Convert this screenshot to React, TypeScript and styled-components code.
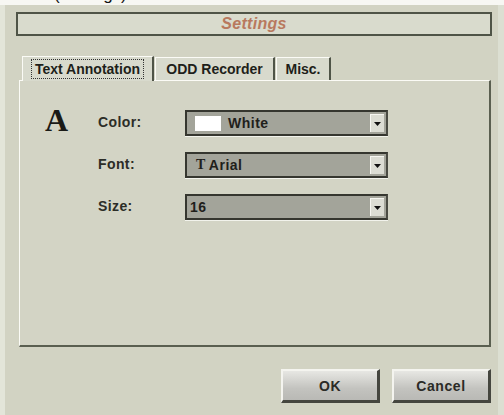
import styled, { createGlobalStyle } from "styled-components";

const GlobalStyle = createGlobalStyle`
  html, body {
    margin: 0;
    padding: 0;
    background: #d2d3c3;
  }
  body {
    font-family: "Liberation Sans", Arial, sans-serif;
  }
`;

const Caption = styled.div`
  height: 5px;
  overflow: hidden;
  background: #f7f7f3;
  padding-left: 54px;
`;

const CaptionText = styled.div`
  margin-top: -15px;
  font-size: 17px;
  line-height: 20px;
  color: #111;
`;

const Window = styled.div`
  height: 410px;
  box-sizing: border-box;
  border-left: 5px solid #e3e5d9;
  border-right: 6px solid #dcdfd2;
  padding: 7px 6px 0 11px;
  display: flex;
  flex-direction: column;
`;

const TitleBar = styled.div`
  height: 24px;
  box-sizing: border-box;
  border: 2px solid #4f5447;
  background: #d9dbcd;
  display: flex;
  align-items: center;
  justify-content: center;
`;

const Title = styled.span`
  font-size: 16px;
  font-weight: bold;
  font-style: italic;
  color: #b8795e;
  letter-spacing: 0.3px;
`;

const Tabs = styled.div`
  display: flex;
  align-items: flex-end;
  margin: 20px 0 0 6px;
  height: 24px;
`;

const Tab = styled.div<{ $active?: boolean; $w: number }>`
  width: ${(p) => p.$w}px;
  height: ${(p) => (p.$active ? 25 : 23)}px;
  box-sizing: border-box;
  background: #d8dacd;
  border-top: 1px solid #fbfbf6;
  border-left: 1px solid #fbfbf6;
  border-right: 2px solid #4f5447;
  margin-bottom: ${(p) => (p.$active ? -1 : 0)}px;
  margin-right: 1px;
  display: flex;
  align-items: center;
  justify-content: center;
  position: relative;
  z-index: ${(p) => (p.$active ? 1 : 0)};
`;

const TabLabel = styled.span<{ $focus?: boolean }>`
  font-size: 14px;
  font-weight: bold;
  color: #1e1f1a;
  padding: 1px 3px;
  border: 1px dotted ${(p) => (p.$focus ? "#333" : "transparent")};
`;

const Panel = styled.div`
  margin-left: 3px;
  width: 472px;
  height: 267px;
  box-sizing: border-box;
  border-top: 1px solid #fbfbf6;
  border-left: 1px solid #fbfbf6;
  border-right: 2px solid #5a5f50;
  border-bottom: 2px solid #5a5f50;
  background: #d3d4c5;
  display: grid;
  grid-template-columns: 78px 87px 203px;
  grid-auto-rows: 42px;
  padding: 29px 0 0 0;
  align-items: start;
`;

const BigA = styled.div`
  font-family: "Liberation Serif", "Times New Roman", serif;
  font-weight: bold;
  font-size: 32px;
  line-height: 26px;
  color: #1a1a16;
  padding-left: 25px;
  margin-top: -3px;
`;

const Label = styled.div`
  grid-column: 2;
  font-size: 14px;
  font-weight: bold;
  color: #2c2d27;
  letter-spacing: 0.4px;
  line-height: 25px;
`;

const Select = styled.div`
  grid-column: 3;
  height: 26px;
  box-sizing: border-box;
  border: 2px solid #35362f;
  border-right-color: #4a4b43;
  box-shadow: 0 1px 0 #f2f3ec;
  background: #a3a49a;
  display: flex;
  align-items: center;
  padding: 0 2px 0 3px;
`;

const Value = styled.span`
  flex: 1;
  font-size: 14px;
  font-weight: bold;
  color: #1f201b;
  letter-spacing: 0.5px;
  display: flex;
  align-items: center;
`;

const Swatch = styled.span`
  width: 26px;
  height: 15px;
  background: #ffffff;
  margin: 0 7px 0 5px;
`;

const FontGlyph = styled.span`
  font-family: "Liberation Serif", "Times New Roman", serif;
  font-weight: bold;
  font-size: 14px;
  margin: 0 3px 0 6px;
`;

const Arrow = styled.span`
  width: 14px;
  height: 18px;
  background: #dcddd4;
  border-top: 1px solid #f6f6f1;
  border-left: 1px solid #f6f6f1;
  box-sizing: border-box;
  display: flex;
  align-items: center;
  justify-content: center;
`;

const Buttons = styled.div`
  display: flex;
  justify-content: flex-end;
  gap: 12px;
  margin-top: 22px;
  padding-right: 1px;
`;

const Button = styled.div`
  width: 99px;
  height: 34px;
  box-sizing: border-box;
  border-top: 2px solid #f4f4ef;
  border-left: 2px solid #f4f4ef;
  border-right: 3px solid #45463f;
  border-bottom: 3px solid #45463f;
  background: linear-gradient(#e7e7e3, #c3c3bf 60%, #b9b9b5);
  display: flex;
  align-items: center;
  justify-content: center;
  font-size: 14px;
  font-weight: bold;
  color: #2b2b27;
  letter-spacing: 0.6px;
`;

function DropArrow() {
  return (
    <Arrow>
      <svg width="7" height="4" viewBox="0 0 7 4">
        <path d="M0 0 H7 L3.5 4 Z" fill="#111" />
      </svg>
    </Arrow>
  );
}

export default function App() {
  return (
    <>
      <GlobalStyle />
      <Caption>
        <CaptionText>(Settings)</CaptionText>
      </Caption>
      <Window>
        <TitleBar>
          <Title>Settings</Title>
        </TitleBar>
        <Tabs>
          <Tab $active $w={132}>
            <TabLabel $focus>Text Annotation</TabLabel>
          </Tab>
          <Tab $w={120}>
            <TabLabel>ODD Recorder</TabLabel>
          </Tab>
          <Tab $w={55}>
            <TabLabel>Misc.</TabLabel>
          </Tab>
        </Tabs>
        <Panel>
          <BigA>A</BigA>
          <Label>Color:</Label>
          <Select>
            <Value>
              <Swatch />
              White
            </Value>
            <DropArrow />
          </Select>
          <Label>Font:</Label>
          <Select>
            <Value>
              <FontGlyph>T</FontGlyph>Arial
            </Value>
            <DropArrow />
          </Select>
          <Label>Size:</Label>
          <Select>
            <Value>16</Value>
            <DropArrow />
          </Select>
        </Panel>
        <Buttons>
          <Button>OK</Button>
          <Button>Cancel</Button>
        </Buttons>
      </Window>
    </>
  );
}
